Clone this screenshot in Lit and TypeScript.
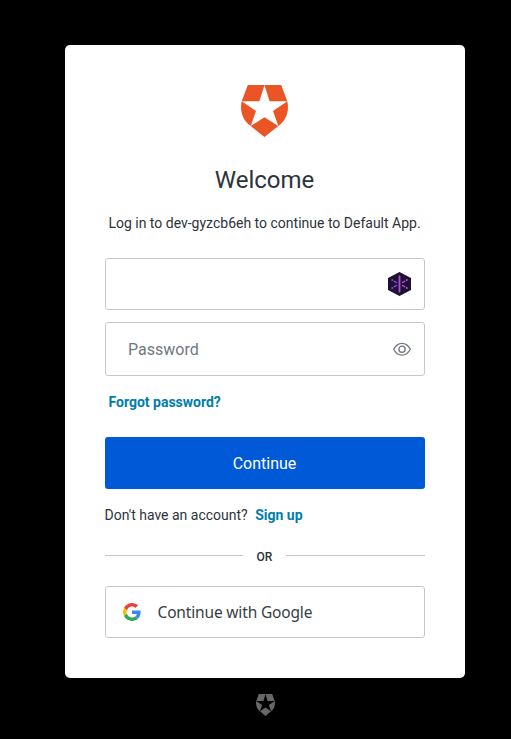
import { LitElement, html, css, svg } from "lit";
import { customElement } from "lit/decorators.js";

const shield = svg`<path fill="currentColor" fill-rule="evenodd" d="M6.8 0H40.2L46.3 16.3C48.5 26 45.2 35.4 37.3 41L23.5 52L9.7 41C1.8 35.4-1.5 26 .7 16.3ZM23.5 0L18.4 16.3H.7L15 26L9.7 41L23.5 32.2L37.3 41L32 26L46.3 16.3H28.6Z"/>`;

@customElement("app-root")
export class AppRoot extends LitElement {
  static styles = css`
    :host {
      display: flex;
      flex-direction: column;
      align-items: center;
      box-sizing: border-box;
      width: 511px;
      height: 739px;
      padding: 45px 0 0 19px;
      background: #000;
      color: #2d333a;
      font: 14px/20px Roboto, sans-serif;
    }
    * { box-sizing: border-box; }
    svg { display: block; flex: none; }
    .card {
      display: flex;
      flex-direction: column;
      width: 400px;
      height: 633px;
      padding: 40px;
      border-radius: 5px;
      background: #fff;
    }
    .logo { align-self: center; margin-right: 1px; color: #eb5424; }
    h1 {
      margin: 28px 1px 0 0;
      font-size: 24px;
      line-height: 30px;
      font-weight: 400;
      text-align: center;
    }
    .intro { margin: 18px 1px 0 0; text-align: center; white-space: nowrap; }
    .field {
      display: flex;
      align-items: center;
      justify-content: space-between;
      height: 52px;
      padding: 0 13px 0 22px;
      margin-top: 25px;
      border: 1px solid #c2c8d0;
      border-radius: 3px;
    }
    .password {
      height: 54px;
      margin-top: 12px;
      color: #6f7780;
      font-size: 16px;
    }
    .password span { padding-top: 2px; }
    .forgot { margin: 16px 0 0 3.5px; }
    a { color: #007dac; font-weight: 700; text-decoration: none; }
    .continue {
      height: 52px;
      margin-top: 25px;
      padding: 0 1px 0 0;
      border: 0;
      border-radius: 3px;
      background: #0059d6;
      color: #fff;
      font: 16px Roboto, sans-serif;
    }
    .signup { margin: 16px 0 0 -0.5px; }
    .signup a { margin-left: 4px; }
    .divider {
      display: flex;
      align-items: center;
      gap: 13px;
      height: 12px;
      margin-top: 25px;
      font-size: 12px;
      font-weight: 500;
      line-height: 12px;
    }
    .divider::before, .divider::after {
      content: "";
      flex: none;
      width: 138px;
      height: 1px;
      background: #c2c8d0;
      margin-bottom: 1px;
    }
    .divider::after { width: 139px; margin-left: auto; }
    .divider { gap: 0; }
    .divider span { padding: 2px 0 0 13.5px; }
    .google {
      display: flex;
      align-items: center;
      gap: 16.5px;
      height: 52px;
      margin-top: 24px;
      padding: 0 17px;
      border: 1px solid #c2c8d0;
      border-radius: 3px;
      background: #fff;
      color: #383e45;
      font: 15.5px "Noto Sans", sans-serif;
      letter-spacing: -0.16px;
    }
    .badge { margin: 16px 0 0 1px; color: #676767; }
  `;

  render() {
    return html`
      <main class="card">
        <svg class="logo" width="47" height="52" viewBox="0 0 47 52">${shield}</svg>
        <h1>Welcome</h1>
        <p class="intro">Log in to dev-gyzcb6eh to continue to Default App.</p>
        <div class="field">
          <span></span>
          <svg width="23" height="24" viewBox="0.5 0 23 24">
            <path fill="#1f1135" d="M12 0L23.5 6V18L12 24L.5 18V6Z"/>
            <g fill="none" stroke-linecap="round">
              <path stroke="#b050d8" stroke-width="1.8" d="M12 4.5V19.5"/>
              <path stroke="#b653ce" stroke-width="1.4" d="M14.9 10.5L17.2 9.3M14.9 13.5L17.2 14.7"/>
              <path stroke="#9150e4" stroke-width="1.4" d="M9.1 10.5L6.8 9.3M9.1 13.5L6.8 14.7"/>
              <path stroke="#7154ee" stroke-width="1.8" d="M4.7 8L4.8 8.1M4.7 16L4.8 15.9"/>
              <path stroke="#c458cf" stroke-width="1.8" d="M19.3 8L19.2 8.1M19.3 16L19.2 15.9"/>
            </g>
          </svg>
        </div>
        <div class="field password">
          <span>Password</span>
          <svg width="18" height="14" viewBox="0 0 18 14" fill="none" stroke="#6f7780" stroke-width="1.3">
            <path d="M.7 7.3C2.7 3.3 5.6 1.3 9 1.3S15.3 3.3 17.3 7.3C15.3 11.3 12.4 13.2 9 13.2S2.7 11.3 .7 7.3Z"/>
            <circle cx="9" cy="7.3" r="3.1"/>
          </svg>
        </div>
        <div class="forgot"><a>Forgot password?</a></div>
        <button class="continue">Continue</button>
        <p class="signup">Don't have an account? <a>Sign up</a></p>
        <div class="divider"><span>OR</span></div>
        <button class="google">
          <svg width="18" height="18" viewBox="0 0 48 48">
            <path fill="#ea4335" d="M24 9.5c3.54 0 6.71 1.22 9.21 3.6l6.85-6.85C35.9 2.38 30.47 0 24 0 14.62 0 6.51 5.38 2.56 13.22l7.98 6.19C12.43 13.72 17.74 9.5 24 9.5z"/>
            <path fill="#4285f4" d="M46.98 24.55c0-1.57-.15-3.09-.38-4.55H24v9.02h12.94c-.58 2.96-2.26 5.48-4.78 7.18l7.73 6c4.51-4.18 7.09-10.36 7.09-17.65z"/>
            <path fill="#fbbc05" d="M10.53 28.59c-.48-1.45-.76-2.99-.76-4.59s.27-3.14.76-4.59l-7.98-6.19C.92 16.46 0 20.12 0 24c0 3.88.92 7.54 2.56 10.78l7.97-6.19z"/>
            <path fill="#34a853" d="M24 48c6.48 0 11.93-2.13 15.89-5.81l-7.73-6c-2.15 1.45-4.92 2.3-8.16 2.3-6.26 0-11.57-4.22-13.47-9.91l-7.98 6.19C6.51 42.62 14.62 48 24 48z"/>
          </svg>
          <span>Continue with Google</span>
        </button>
      </main>
      <svg class="badge" width="19" height="22" viewBox="0 0 47 52" preserveAspectRatio="none">${shield}</svg>
    `;
  }
}
